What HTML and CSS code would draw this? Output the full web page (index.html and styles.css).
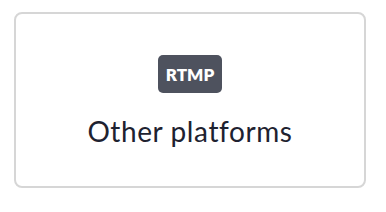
FILE: index.html
```html
<!DOCTYPE html>
<html lang="en">
<head>
<meta charset="utf-8">
<title>Other platforms</title>
<link rel="stylesheet" href="styles.css">
</head>
<body>
<div class="page">
  <div class="card">
    <span class="badge">RTMP</span>
    <span class="label">Other platforms</span>
  </div>
</div>
</body>
</html>
```

FILE: styles.css
```css
html, body {
  margin: 0;
  padding: 0;
  background: #ffffff;
}
.page {
  padding: 12px 20px 0 14px;
}
.card {
  box-sizing: border-box;
  width: 352px;
  height: 176px;
  border: 2px solid #d6d6d6;
  border-radius: 8px;
  background: #ffffff;
  display: flex;
  flex-direction: column;
  align-items: center;
  padding-top: 41px;
}
.badge {
  box-sizing: border-box;
  width: 64px;
  height: 38px;
  display: flex;
  align-items: center;
  justify-content: center;
  background: #4e525e;
  color: #ffffff;
  border-radius: 5px;
  font-family: "Lato", "Liberation Sans", sans-serif;
  font-weight: 800;
  font-size: 17px;
}
.label {
  margin-top: 21px;
  font-family: "Lato", "Liberation Sans", sans-serif;
  font-size: 28px;
  line-height: 34px;
  letter-spacing: 0.6px;
  color: #1e2230;
}
```
